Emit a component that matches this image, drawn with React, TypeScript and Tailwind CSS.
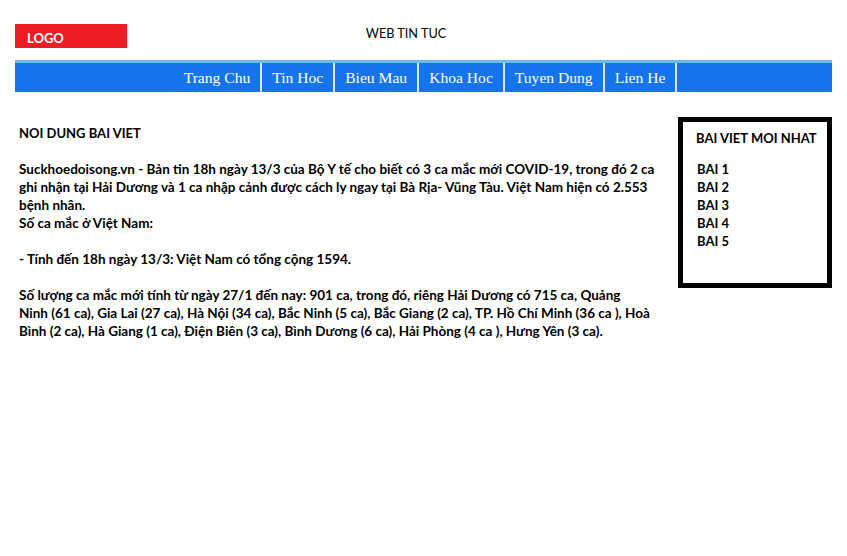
export default function App() {
  const font = { fontFamily: 'Lato, "Open Sans", sans-serif' };
  return (
    <div className="w-[847px] h-[556px] bg-white text-black" style={font}>
      <div className="mx-[15px]">
        <div className="flex items-start h-[60px] pt-[24px]">
          <div className="w-[112px] h-[24px] bg-[#ee1c25] text-white font-bold text-[13px] leading-[24px] pl-[12px] pt-[2px]">LOGO</div>
          <div className="flex-1 flex justify-center pr-[147px] text-[12.7px] leading-[18px]">WEB TIN TUC</div>
        </div>
        <nav className="bg-[#1574ec] border-t-[3px] border-[#6bbbe6] h-[32px] flex justify-center pl-[4px] font-['Liberation_Serif',serif] text-[15.6px] text-white">
          {["Trang Chu", "Tin Hoc", "Bieu Mau", "Khoa Hoc", "Tuyen Dung", "Lien He"].map((t) => (
            <div key={t} className="px-[10px] border-r-2 border-[#dfe8f5] flex items-center leading-[29px]">{t}</div>
          ))}
        </nav>
        <div className="flex mt-[25px]">
          <div className="flex-1 pl-[4px] pr-[8px] pt-[7px] font-bold text-[13.5px] leading-[18px] whitespace-nowrap">
            <p className="text-[13px]">NOI DUNG BAI VIET</p>
            <p className="mt-[18px]">Suckhoedoisong.vn - Bản tin 18h ngày 13/3 của Bộ Y tế cho biết có 3 ca mắc mới COVID-19, trong đó 2 ca<br />ghi nhận tại Hải Dương và 1 ca nhập cảnh được cách ly ngay tại Bà Rịa- Vũng Tàu. Việt Nam hiện có 2.553<br />bệnh nhân.</p>
            <p>Số ca mắc ở Việt Nam:</p>
            <p className="mt-[18px]">- Tính đến 18h ngày 13/3: Việt Nam có tổng cộng 1594.</p>
            <p className="mt-[18px]">Số lượng ca mắc mới tính từ ngày 27/1 đến nay: 901 ca, trong đó, riêng Hải Dương có 715 ca, Quảng<br />Ninh (61 ca), Gia Lai (27 ca), Hà Nội (34 ca), Bắc Ninh (5 ca), Bắc Giang (2 ca), TP. Hồ Chí Minh (36 ca ), Hoà<br />Bình (2 ca), Hà Giang (1 ca), Điện Biên (3 ca), Bình Dương (6 ca), Hải Phòng (4 ca ), Hưng Yên (3 ca).</p>
          </div>
          <div className="w-[154px] h-[171px] border-[5px] border-black pl-[13px] pt-[7px] font-bold text-[13px] leading-[18px]">
            <p>BAI VIET MOI NHAT</p>
            <div className="mt-[13px] pl-[1px]">
              <p>BAI 1</p>
              <p>BAI 2</p>
              <p>BAI 3</p>
              <p>BAI 4</p>
              <p>BAI 5</p>
            </div>
          </div>
        </div>
      </div>
    </div>
  );
}
